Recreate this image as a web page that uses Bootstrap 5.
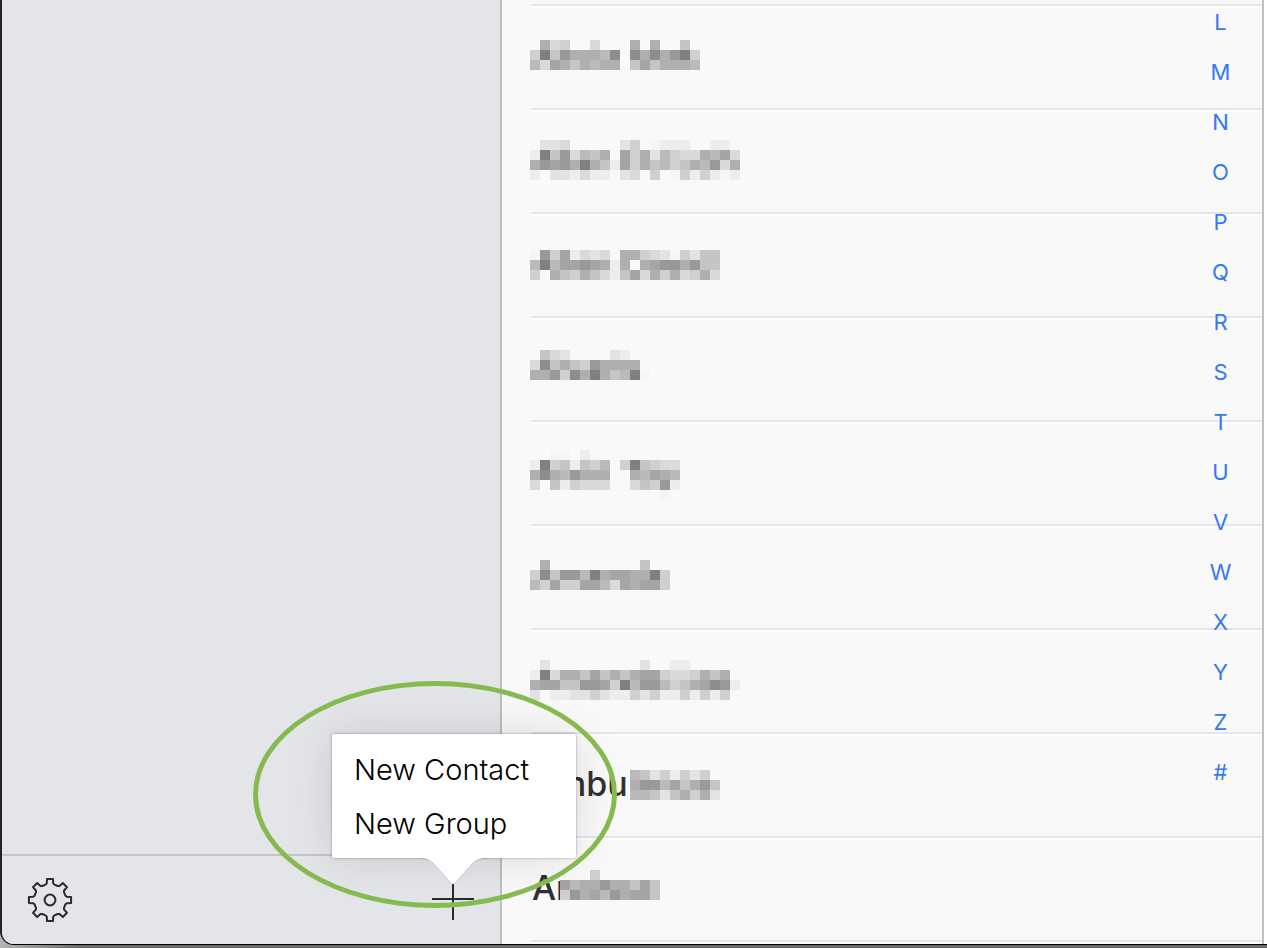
<!DOCTYPE html>
<html lang="en">
<head>
<meta charset="utf-8">
<meta name="viewport" content="width=device-width, initial-scale=1">
<title>Contacts</title>
<link rel="stylesheet" href="https://cdn.jsdelivr.net/npm/bootstrap@5.3.0/dist/css/bootstrap.min.css">
<style>
body { font-family: Inter, "Liberation Sans", sans-serif; background: linear-gradient(90deg, #b4b4b6, #6b6a6d 80px); }
.app-frame { border-left: 2px solid #222; border-bottom: 1px solid #000; border-bottom-left-radius: 14px; background: #fff; padding-right: 3px; height: calc(100vh - 3px); }
.groups-pane { width: 500px; background: #e4e5e9; border-right: 2px solid #bdbec1; border-bottom-left-radius: 12px; z-index: 2; }
.groups-bar { height: 90px; border-top: 2px solid #c3c4c7; padding: 0 25px 2px; }
.icon-btn { width: 44px; height: 44px; padding: 0; border: 0; background: none; color: #2b2b2d; display: block; }
.icon-btn svg { display: block; }
.people-pane { background: #f9f9f9; border-right: 2px solid #c0c3c4; min-width: 0; }
.people-list { padding: 4px 0 0 30px; }
.person { height: 104px; padding-bottom: 4px; border-top: 2px solid #e5e5e5; box-shadow: inset 0 2px #fff; font-size: 34px; font-weight: 500; color: #303032; }
.pixels { left: -2px; top: 0; }
.index-nav { width: 83px; right: 0; top: 0; margin-top: -3px; }
.index-nav a { height: 50px; line-height: 50px; font-size: 22px; font-weight: 400; color: #3478f6; text-decoration: none; text-align: center; }
.add-menu { right: -101px; bottom: 63px; width: 244px; height: 124px; padding: 9px 0 7px; background: #fff; border-radius: 2px; box-shadow: 0 0 3px rgba(0,0,0,.35), 0 0 48px rgba(0,0,0,.12); }
.add-menu button { height: 54px; padding: 0 0 0 22px; border: 0; background: none; text-align: left; font-size: 29px; font-weight: 300; line-height: 54px; color: #000; }
.add-menu svg { left: 88px; top: 123px; }
.callout-ring { left: -178px; top: -196px; width: 364px; height: 227px; border: 5px solid #86b94f; border-radius: 50%; pointer-events: none; }
</style>
</head>
<body class="vh-100 overflow-hidden">
<div class="app-frame d-flex">
  <aside class="groups-pane position-relative d-flex flex-column flex-shrink-0">
    <div class="flex-grow-1"></div>
    <div class="groups-bar d-flex align-items-center justify-content-between">
      <button class="icon-btn" type="button" aria-label="Settings">
        <svg width="46" height="46" viewBox="0 0 46 46" fill="none" stroke="currentColor" stroke-width="2" stroke-linejoin="round">
          <path id="gear" d=""/>
          <circle cx="23" cy="23" r="5.4"/>
        </svg>
      </button>
      <div class="position-relative">
        <button class="icon-btn" type="button" aria-label="Add">
          <svg width="44" height="44" viewBox="0 0 44 44" stroke="currentColor" stroke-width="2"><path d="M1 22H43M22 3V43"/></svg>
        </button>
        <div class="add-menu position-absolute d-flex flex-column">
          <button type="button">New Contact</button>
          <button type="button">New Group</button>
          <svg class="position-absolute" width="68" height="28" viewBox="0 0 68 28" fill="#fff"><path d="M0 0V1C7 1 10 3 14 7L31 26Q33 28 35 26L52 7C56 3 59 1 68 1V0Z"/><path d="M2 1.500C8 1.500 11 4 14 7L31 26M35 26L52 7C56 3 59 1.500 66 1.500" fill="none" stroke="#000" stroke-opacity=".14"/></svg>
        </div>
        <div class="callout-ring position-absolute"></div>
      </div>
    </div>
  </aside>
  <main class="people-pane position-relative flex-grow-1 overflow-hidden">
    <ul class="people-list list-unstyled mb-0">
      <li class="person position-relative d-flex align-items-center" data-top="34" data-cells=".734..3...7.7..5./4b597776a.a7a79b4/638757677.5857776"></li>
      <li class="person position-relative d-flex align-items-center" data-top="30" data-cells=".223.....24.0111..11./1b593657.847264337683/79897b751847564576937/1.221311.23.4.0414101"></li>
      <li class="person position-relative d-flex align-items-center" data-top="36" data-cells="09481323.7743204255/6b68898717.78997955/4.75475315837473473"></li>
      <li class="person position-relative d-flex align-items-center" data-top="32" data-cells=".532....21./3a575497777/7794a7b756b0"></li>
      <li class="person position-relative d-flex align-items-center" data-top="28" data-cells="..00.1/1b451546.4b5433/7a769777..76876/3.514333..35491/.............0"></li>
      <li class="person position-relative d-flex align-items-center" data-top="34" data-cells=".7.........5/4a5996b78877b4/64844886387884"></li>
      <li class="person position-relative d-flex align-items-center" data-top="30" data-cells=".2.........2..11/1b377585757884334757/788559984b69964578a91/2.112242114241141414"></li>
      <li class="person position-relative d-flex align-items-center" data-top="36" data-cells="..........65241424/..........799685795/..........665257472">Ambu</li>
      <li class="person position-relative d-flex align-items-center" data-top="32" data-cells="......4/...8677977585/...4978697885">An</li>
      <li class="person"></li>
    </ul>
    <nav class="index-nav position-absolute d-flex flex-column" aria-label="Alphabet">
      <a href="#L">L</a><a href="#M">M</a><a href="#N">N</a><a href="#O">O</a><a href="#P">P</a><a href="#Q">Q</a><a href="#R">R</a><a href="#S">S</a><a href="#T">T</a><a href="#U">U</a><a href="#V">V</a><a href="#W">W</a><a href="#X">X</a><a href="#Y">Y</a><a href="#Z">Z</a><a href="#other">#</a>
    </nav>
  </main>
</div>
<script src="https://cdn.jsdelivr.net/npm/bootstrap@5.3.0/dist/js/bootstrap.bundle.min.js"></script>
<script>
// Privacy mosaic: each character is one 10px cell, 0 (faintest) to b (darkest).
const shades = { 0: '#f5f5f5', 1: '#ededed', 2: '#e3e3e3', 3: '#dadada', 4: '#d0d0d0', 5: '#c5c5c5', 6: '#bababa', 7: '#afafaf', 8: '#a5a5a5', 9: '#999', a: '#8d8d8d', b: '#808080' };
document.querySelectorAll('[data-cells]').forEach(li => {
  let cells = '';
  li.dataset.cells.split('/').forEach((line, r) => [...line].forEach((c, i) => {
    if (shades[c]) cells += `<rect x="${i * 10}" y="${+li.dataset.top + r * 10}" width="10" height="10" fill="${shades[c]}"/>`;
  }));
  li.insertAdjacentHTML('beforeend', `<svg class="pixels position-absolute" width="220" height="102" shape-rendering="crispEdges" aria-hidden="true">${cells}</svg>`);
});
// Eight-toothed gear outline.
let d = '';
for (let k = 0; k < 8; k++) {
  [[-16, 16], [-11, 17], [-8, 21.3], [8, 21.3], [11, 17], [16, 16]].forEach(([a, r]) => {
    const t = (k * 45 + a) * Math.PI / 180;
    d += (d ? 'L' : 'M') + (23 + r * Math.sin(t)).toFixed(2) + ' ' + (23 - r * Math.cos(t)).toFixed(2);
  });
}
document.getElementById('gear').setAttribute('d', d + 'Z');
</script>
</body>
</html>
